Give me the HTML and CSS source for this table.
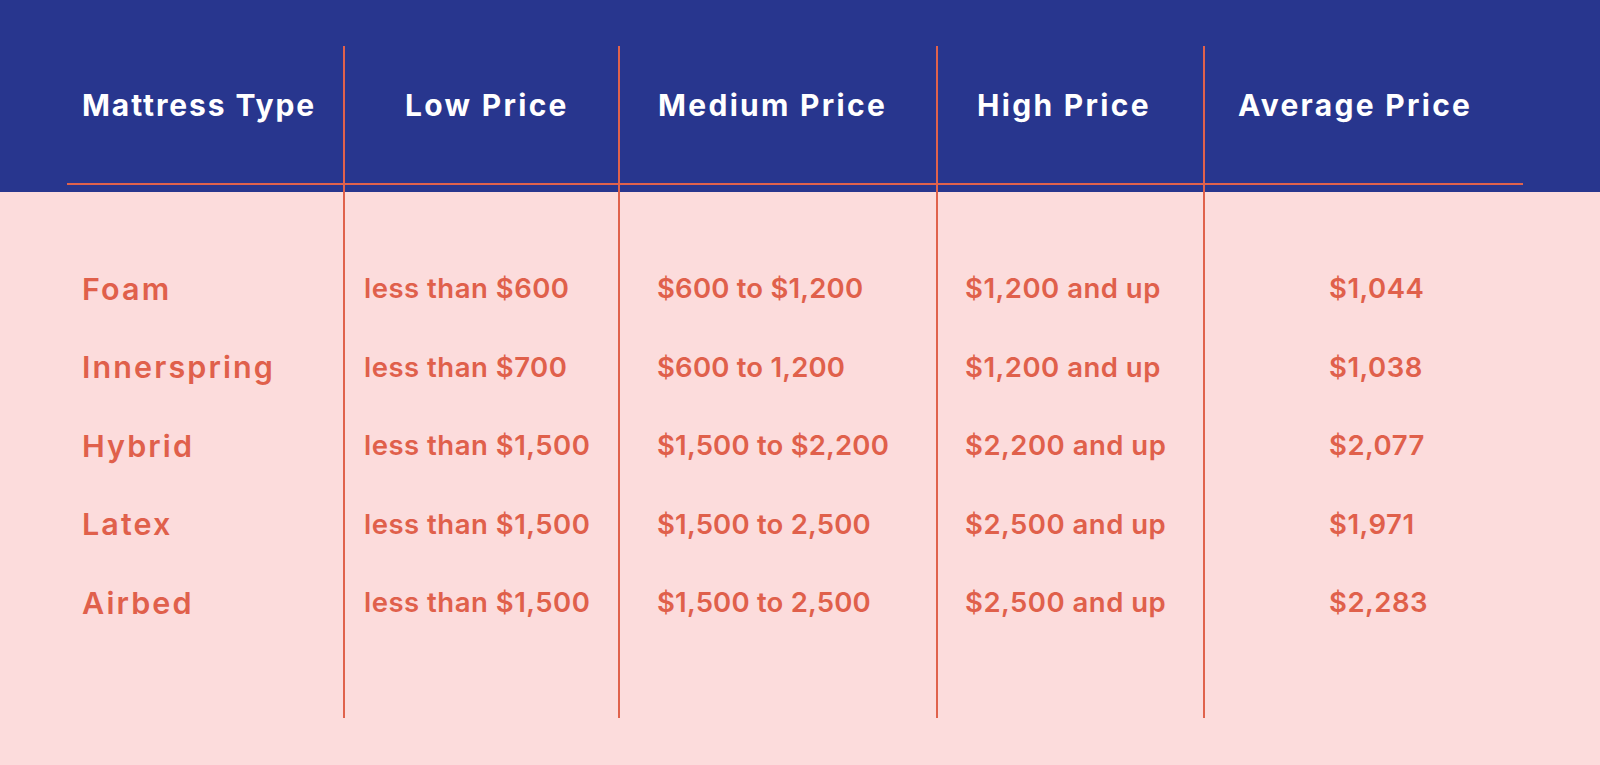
FILE: index.html
```html
<!DOCTYPE html>
<html>
<head>
<meta charset="utf-8">
<link rel="stylesheet" href="styles.css">
</head>
<body>
<div class="page">
  <div class="table">
    <div class="col c1">
      <div class="head">Mattress Type</div>
      <div class="body">
        <div class="cell name">Foam</div>
        <div class="cell name">Innerspring</div>
        <div class="cell name">Hybrid</div>
        <div class="cell name">Latex</div>
        <div class="cell name">Airbed</div>
      </div>
    </div>
    <div class="col c2">
      <div class="head">Low Price</div>
      <div class="body">
        <div class="cell">less than $600</div>
        <div class="cell">less than $700</div>
        <div class="cell">less than $1,500</div>
        <div class="cell">less than $1,500</div>
        <div class="cell">less than $1,500</div>
      </div>
    </div>
    <div class="col c3">
      <div class="head">Medium Price</div>
      <div class="body">
        <div class="cell">$600 to $1,200</div>
        <div class="cell">$600 to 1,200</div>
        <div class="cell">$1,500 to $2,200</div>
        <div class="cell">$1,500 to 2,500</div>
        <div class="cell">$1,500 to 2,500</div>
      </div>
    </div>
    <div class="col c4">
      <div class="head">High Price</div>
      <div class="body">
        <div class="cell">$1,200 and up</div>
        <div class="cell">$1,200 and up</div>
        <div class="cell">$2,200 and up</div>
        <div class="cell">$2,500 and up</div>
        <div class="cell">$2,500 and up</div>
      </div>
    </div>
    <div class="col c5">
      <div class="head">Average Price</div>
      <div class="body">
        <div class="cell">$1,044</div>
        <div class="cell">$1,038</div>
        <div class="cell">$2,077</div>
        <div class="cell">$1,971</div>
        <div class="cell">$2,283</div>
      </div>
    </div>
  </div>
</div>
</body>
</html>
```
FILE: styles.css
```css
html, body {
  margin: 0;
  padding: 0;
}
body {
  width: 1600px;
  height: 765px;
  overflow: hidden;
  background: linear-gradient(to bottom, #28368e 0, #28368e 192px, #fcdcdc 192px, #fcdcdc 100%);
  font-family: Inter, "Open Sans", sans-serif;
}
.page {
  padding: 46px 0 0 67px;
}
.table {
  display: flex;
  width: 1456px;
}
.col {
  display: flex;
  flex-direction: column;
}
.col + .col {
  border-left: 2px solid #e0624c;
}
.c1 { width: 276px; }
.c2 { width: 273px; }
.c3 { width: 316px; }
.c4 { width: 265px; }
.c5 { width: 318px; }
.head {
  height: 139px;
  box-sizing: border-box;
  padding-top: 40px;
  border-bottom: 2px solid #e0624c;
  color: #ffffff;
  font-weight: 700;
  font-size: 30px;
  letter-spacing: 2.3px;
  line-height: 38px;
  white-space: nowrap;
}
.c1 .head { letter-spacing: 1.9px; }
.body {
  padding: 64px 0 76px;
}
.cell {
  height: 78.5px;
  display: flex;
  align-items: center;
  color: #e0604b;
  font-weight: 600;
  font-size: 27.5px;
  letter-spacing: 0.5px;
  white-space: nowrap;
}
.c3 .cell { letter-spacing: 0.2px; }
.cell.name {
  font-size: 30.5px;
  letter-spacing: 2.1px;
}
.c1 .head, .c1 .cell { padding-left: 15px; }
.c2 .head { padding-left: 60px; }
.c2 .cell { padding-left: 19px; }
.c3 .head { padding-left: 38px; }
.c3 .cell { padding-left: 37px; }
.c4 .head { padding-left: 39px; }
.c4 .cell { padding-left: 27px; }
.c5 .head { padding-left: 33px; }
.c5 .cell { padding-left: 124px; }
```
